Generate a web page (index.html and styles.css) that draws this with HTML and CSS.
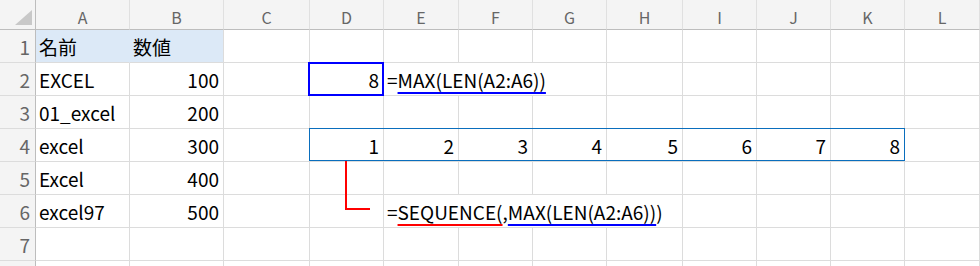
FILE: index.html
```html
<!DOCTYPE html>
<html lang="ja">
  <head>
    <meta charset="UTF-8" />
    <meta name="viewport" content="width=device-width, initial-scale=1.0" />
    <title>SEQUENCE</title>
    <link rel="stylesheet" href="styles.css">
  </head>
  <body>
    <section class="sheet">
      <!-- kolonneoverskrifter -->
      <div class="corner"><div class="tri"></div></div>
      <div class="hd">A</div>
      <div class="hd">B</div>
      <div class="hd">C</div>
      <div class="hd">D</div>
      <div class="hd">E</div>
      <div class="hd">F</div>
      <div class="hd">G</div>
      <div class="hd">H</div>
      <div class="hd">I</div>
      <div class="hd">J</div>
      <div class="hd">K</div>
      <div class="hd">L</div>

      <!-- 1 -->
      <div class="rn">1</div>
      <div class="c fill">名前</div>
      <div class="c fill">数値</div>
      <div class="c"></div><div class="c"></div><div class="c"></div><div class="c"></div>
      <div class="c"></div><div class="c"></div><div class="c"></div><div class="c"></div>
      <div class="c"></div><div class="c"></div>

      <!-- 2 -->
      <div class="rn">2</div>
      <div class="c">EXCEL</div>
      <div class="c num">100</div>
      <div class="c"></div>
      <div class="c num">8</div>
      <div class="c span3">=<span class="u blaa">MAX(LEN(A2:A6))</span></div>
      <div class="c"></div><div class="c"></div><div class="c"></div>
      <div class="c"></div><div class="c"></div>

      <!-- 3 -->
      <div class="rn">3</div>
      <div class="c">01_excel</div>
      <div class="c num">200</div>
      <div class="c"></div><div class="c"></div><div class="c"></div><div class="c"></div><div class="c"></div>
      <div class="c"></div><div class="c"></div><div class="c"></div><div class="c"></div><div class="c"></div>

      <!-- 4 -->
      <div class="rn">4</div>
      <div class="c">excel</div>
      <div class="c num">300</div>
      <div class="c"></div>
      <div class="c num">1</div>
      <div class="c num">2</div>
      <div class="c num">3</div>
      <div class="c num">4</div>
      <div class="c num">5</div>
      <div class="c num">6</div>
      <div class="c num">7</div>
      <div class="c num">8</div>
      <div class="c"></div>

      <!-- 5 -->
      <div class="rn">5</div>
      <div class="c">Excel</div>
      <div class="c num">400</div>
      <div class="c"></div><div class="c"></div><div class="c"></div><div class="c"></div><div class="c"></div>
      <div class="c"></div><div class="c"></div><div class="c"></div><div class="c"></div><div class="c"></div>

      <!-- 6 -->
      <div class="rn">6</div>
      <div class="c">excel97</div>
      <div class="c num">500</div>
      <div class="c"></div><div class="c"></div>
      <div class="c span4">=<span class="u roed">SEQUENCE(</span>,<span class="u blaa">MAX(LEN(A2:A6))</span>)</div>
      <div class="c"></div><div class="c"></div><div class="c"></div><div class="c"></div>

      <!-- 7 -->
      <div class="rn">7</div>
      <div class="c"></div><div class="c"></div><div class="c"></div><div class="c"></div>
      <div class="c"></div><div class="c"></div><div class="c"></div><div class="c"></div>
      <div class="c"></div><div class="c"></div><div class="c"></div><div class="c"></div>

      <!-- 8 (kun kanten ses) -->
      <div class="rn"></div>
      <div class="c"></div><div class="c"></div><div class="c"></div><div class="c"></div>
      <div class="c"></div><div class="c"></div><div class="c"></div><div class="c"></div>
      <div class="c"></div><div class="c"></div><div class="c"></div><div class="c"></div>

      <!-- markeringer oven på arket -->
      <div class="boks_d2"></div>
      <div class="boks_spill"></div>
      <div class="pil"></div>
    </section>
  </body>
</html>
```

FILE: styles.css
```css
* {
  box-sizing: border-box;
}
body {
  margin: 0;
  background-color: white;
  font-family: "Noto Sans CJK JP", "Noto Sans", sans-serif;
  overflow: hidden;
}
.sheet {
  position: relative;
  display: grid;
  grid-template-columns: 36px 94px 94px 86px 74px 75px 74px 74px 76px 74px 74px 74px 1fr;
  grid-template-rows: 30px repeat(8, 33px);
}

.corner,
.hd,
.rn {
  background-color: #f4f4f4;
  color: #666;
}
.corner {
  display: flex;
  justify-content: flex-end;
  align-items: flex-end;
  padding: 0 3px 4px 0;
  border-right: 1px solid #bdbdbd;
  border-bottom: 1px solid #bdbdbd;
}
.tri {
  width: 17px;
  height: 15px;
  background-color: #c8c8c8;
  clip-path: polygon(100% 0, 100% 100%, 0 100%);
}
.hd {
  font-size: 16px;
  line-height: 16px;
  padding-top: 9px;
  text-align: center;
  border-right: 1px solid #e0e0e0;
  border-bottom: 1px solid #bdbdbd;
}
.rn {
  font-size: 19px;
  line-height: 19px;
  padding: 7px 5px 0 0;
  text-align: right;
  border-right: 1px solid #bdbdbd;
  border-bottom: 1px solid #dcdcdc;
}

.c {
  font-size: 19px;
  line-height: 19px;
  padding: 7px 4px 0 3px;
  white-space: nowrap;
  color: black;
  border-right: 1px solid #dcdcdc;
  border-bottom: 1px solid #dcdcdc;
}
.num {
  text-align: right;
}
.fill {
  background-color: #dce9f7;
  border-right-color: #dce9f7;
}
.fill + .fill {
  border-right-color: #dcdcdc;
}
.span3 {
  grid-column: span 3;
}
.span4 {
  grid-column: span 4;
}

.u {
  text-decoration: underline;
  text-decoration-thickness: 2px;
  text-underline-offset: 4px;
}
.blaa {
  text-decoration-color: #0000ff;
}
.roed {
  text-decoration-color: #ff0000;
}

.boks_d2 {
  position: absolute;
  left: 308px;
  top: 62px;
  width: 76px;
  height: 34px;
  border: 2px solid #0000ff;
}
.boks_spill {
  position: absolute;
  left: 309px;
  top: 128px;
  width: 596px;
  height: 33px;
  border: 1px solid #0a6ebd;
}
.pil {
  position: absolute;
  left: 345px;
  top: 161px;
  width: 25px;
  height: 49px;
  border-left: 2px solid red;
  border-bottom: 2px solid red;
}
```
